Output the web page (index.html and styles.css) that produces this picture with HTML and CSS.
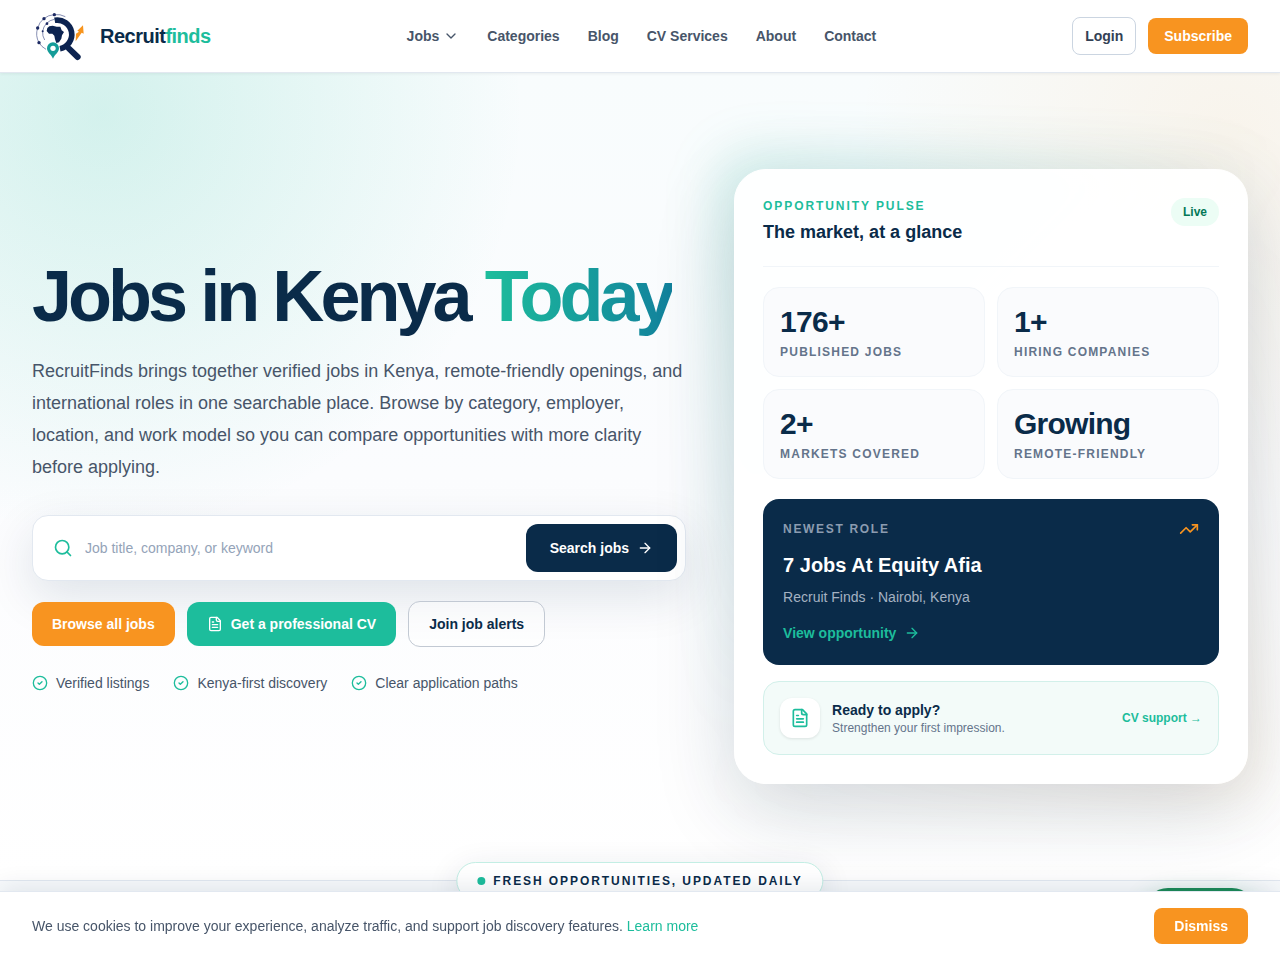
FILE: index.html
```html
<!DOCTYPE html>
<html lang="en">
<head>
    <meta charset="UTF-8">
    <meta name="viewport" content="width=device-width, initial-scale=1.0">
    <title>Recruitfinds - Jobs in Kenya Today</title>
    <link rel="stylesheet" href="styles.css">
</head>
<body>
    <header class="site-header">
        <a href="#" class="brand">
            <svg class="brand-logo" viewBox="36 24 168 168" aria-hidden="true">
                <g fill="none" stroke="#4a568c" stroke-width="2">
                    <path d="M136 50A54 54 0 0 0 103 44A54 54 0 0 0 53 84A54 54 0 0 0 57 128A54 54 0 0 0 78 148"/>
                    <path d="M103 58A42 42 0 0 0 68 94A42 42 0 0 0 74 120"/>
                </g>
                <g fill="#1d2a63">
                    <circle cx="103" cy="44" r="5"/>
                    <circle cx="72" cy="56" r="5"/>
                    <circle cx="53" cy="84" r="5"/>
                    <circle cx="57" cy="128" r="5"/>
                    <circle cx="81" cy="71" r="4"/>
                    <circle cx="68" cy="94" r="3"/>
                </g>
                <path d="M104 61A43 43 0 1 1 120 146" fill="none" stroke="#0c2350" stroke-width="17"/>
                <path d="M147 146L173 171" stroke="#0c2350" stroke-width="18" stroke-linecap="round"/>
                <path d="M82 84L88 79L98 77L110 80L121 80L125 91L132 96L126 106L124 116L117 127L109 129L105 118L103 107L97 101L87 101L80 93Z" fill="#0c2350"/>
                <path d="M167 124L168 101L177 95L172 92L189 76L191 101L185 98Z" fill="#f7941d"/>
                <path d="M99 176C94 164 81 157 81 145A18 18 0 0 1 117 145C117 157 104 164 99 176Z" fill="#149c98"/>
                <circle cx="99" cy="145" r="8" fill="#fff"/>
            </svg>
            <span class="brand-name">Recruit<span>finds</span></span>
        </a>
        <nav class="main-nav">
            <a href="#">Jobs
                <svg class="icon" viewBox="0 0 24 24"><path d="m6 9 6 6 6-6"/></svg>
            </a>
            <a href="#">Categories</a>
            <a href="#">Blog</a>
            <a href="#">CV Services</a>
            <a href="#">About</a>
            <a href="#">Contact</a>
        </nav>
        <div class="header-actions">
            <a href="#" class="btn-small btn-login">Login</a>
            <a href="#" class="btn-small btn-orange">Subscribe</a>
        </div>
    </header>

    <main>
        <section class="hero">
            <div class="hero-content">
                <h1>Jobs in Kenya <span>Today</span></h1>
                <p class="hero-text">RecruitFinds brings together verified jobs in Kenya, remote-friendly openings, and international roles in one searchable place. Browse by category, employer, location, and work model so you can compare opportunities with more clarity before applying.</p>

                <form class="search-form">
                    <svg class="icon icon-md" viewBox="0 0 24 24"><circle cx="11" cy="11" r="8"/><path d="m21 21-4.3-4.3"/></svg>
                    <input type="search" aria-label="Search jobs" placeholder="Job title, company, or keyword">
                    <button type="submit">Search jobs
                        <svg class="icon" viewBox="0 0 24 24"><path d="M5 12h14"/><path d="m12 5 7 7-7 7"/></svg>
                    </button>
                </form>

                <div class="hero-buttons">
                    <a href="#" class="btn btn-orange">Browse all jobs</a>
                    <a href="#" class="btn btn-teal">
                        <svg class="icon" viewBox="0 0 24 24"><path d="M15 2H6a2 2 0 0 0-2 2v16a2 2 0 0 0 2 2h12a2 2 0 0 0 2-2V7Z"/><path d="M14 2v4a2 2 0 0 0 2 2h4"/><path d="M10 9H8"/><path d="M16 13H8"/><path d="M16 17H8"/></svg>
                        Get a professional CV
                    </a>
                    <a href="#" class="btn btn-outline">Join job alerts</a>
                </div>

                <ul class="checks">
                    <li><svg class="icon" viewBox="0 0 24 24"><circle cx="12" cy="12" r="10"/><path d="m9 12 2 2 4-4"/></svg>Verified listings</li>
                    <li><svg class="icon" viewBox="0 0 24 24"><circle cx="12" cy="12" r="10"/><path d="m9 12 2 2 4-4"/></svg>Kenya-first discovery</li>
                    <li><svg class="icon" viewBox="0 0 24 24"><circle cx="12" cy="12" r="10"/><path d="m9 12 2 2 4-4"/></svg>Clear application paths</li>
                </ul>
            </div>

            <div class="pulse">
                <div class="pulse-card">
                    <div class="pulse-head">
                        <div>
                            <p class="eyebrow">Opportunity pulse</p>
                            <h2>The market, at a glance</h2>
                        </div>
                        <span class="live">Live</span>
                    </div>

                    <div class="stats">
                        <div class="stat"><strong>176+</strong><span>Published jobs</span></div>
                        <div class="stat"><strong>1+</strong><span>Hiring companies</span></div>
                        <div class="stat"><strong>2+</strong><span>Markets covered</span></div>
                        <div class="stat"><strong>Growing</strong><span>Remote-friendly</span></div>
                    </div>

                    <article class="newest">
                        <div class="newest-head">
                            <span>Newest role</span>
                            <svg class="icon icon-md" viewBox="0 0 24 24"><path d="M16 7h6v6"/><path d="m22 7-8.5 8.5-5-5L2 17"/></svg>
                        </div>
                        <h3>7 Jobs At Equity Afia</h3>
                        <p>Recruit Finds · Nairobi, Kenya</p>
                        <a href="#">View opportunity
                            <svg class="icon" viewBox="0 0 24 24"><path d="M5 12h14"/><path d="m12 5 7 7-7 7"/></svg>
                        </a>
                    </article>

                    <div class="cv-box">
                        <div class="cv-icon">
                            <svg class="icon icon-md" viewBox="0 0 24 24"><path d="M15 2H6a2 2 0 0 0-2 2v16a2 2 0 0 0 2 2h12a2 2 0 0 0 2-2V7Z"/><path d="M14 2v4a2 2 0 0 0 2 2h4"/><path d="M10 9H8"/><path d="M16 13H8"/><path d="M16 17H8"/></svg>
                        </div>
                        <div class="cv-text">
                            <h3>Ready to apply?</h3>
                            <p>Strengthen your first impression.</p>
                        </div>
                        <a href="#">CV support →</a>
                    </div>
                </div>
            </div>
        </section>

        <section class="fresh">
            <p class="fresh-pill">Fresh opportunities, updated daily</p>
        </section>
    </main>

    <a href="#" class="chat-button" aria-label="Chat"></a>

    <div class="cookie-bar">
        <p>We use cookies to improve your experience, analyze traffic, and support job discovery features. <a href="#">Learn more</a></p>
        <button type="button" class="btn-small btn-orange">Dismiss</button>
    </div>
</body>
</html>
```
FILE: styles.css
```css
* {
    box-sizing: border-box;
}
body {
    margin: 0;
    font-family: "Liberation Sans", Arial, sans-serif;
    font-size: 14px;
    line-height: 20px;
    color: #475569;
    background-color: #fff;
    overflow-x: hidden;
}
h1, h2, h3, p, ul {
    margin: 0;
    padding: 0;
}
a {
    color: inherit;
    text-decoration: none;
}
button, input {
    font-family: inherit;
    font-size: 14px;
    line-height: 20px;
}
button {
    border: none;
    cursor: pointer;
}
.icon {
    width: 16px;
    height: 16px;
    flex-shrink: 0;
    fill: none;
    stroke: currentColor;
    stroke-width: 2;
    stroke-linecap: round;
    stroke-linejoin: round;
}
.icon-md {
    width: 20px;
    height: 20px;
}

/* Header */
.site-header {
    position: sticky;
    top: 0;
    z-index: 10;
    display: flex;
    align-items: center;
    justify-content: space-between;
    padding: 8px 32px;
    background-color: #fff;
    border-bottom: 1px solid #e2e8f0;
    box-shadow: 0 1px 3px rgba(0, 0, 0, 0.06);
}
.brand {
    display: flex;
    align-items: center;
    gap: 12px;
}
.brand-logo {
    width: 56px;
    height: 56px;
}
.brand-name {
    font-size: 20px;
    line-height: 28px;
    font-weight: 700;
    letter-spacing: -0.025em;
    color: #0a2b49;
}
.brand-name span {
    color: #1dbd9c;
}
.main-nav {
    display: flex;
    gap: 28px;
    font-weight: 700;
}
.main-nav a {
    display: flex;
    align-items: center;
    gap: 4px;
}
.header-actions {
    display: flex;
    align-items: center;
    gap: 12px;
}
.btn-small {
    padding: 8px 16px;
    border-radius: 8px;
    font-weight: 700;
}
.btn-login {
    padding: 8px 12px;
    border: 1px solid #cbd5e1;
    color: #334155;
}
.btn-orange {
    background-color: #f89420;
    color: #fff;
}

/* Hero */
.hero {
    display: grid;
    grid-template-columns: 14fr 11fr;
    align-items: center;
    gap: 48px;
    padding: 96px 32px;
    background:
        radial-gradient(circle at 8% 5%, rgba(29, 189, 156, 0.17), transparent 30%),
        radial-gradient(circle at 96% 8%, rgba(248, 148, 32, 0.08), transparent 26%),
        linear-gradient(180deg, #f8fcfd 0%, #fbfcfe 50%, #fff 100%);
}
h1 {
    font-size: 72px;
    line-height: 70px;
    letter-spacing: -0.055em;
    color: #0a2b49;
}
h1 span {
    padding-bottom: 8px;
    color: transparent;
    background: linear-gradient(90deg, #1dbd9c, #12819c);
    -webkit-background-clip: text;
    background-clip: text;
}
.hero-text {
    margin-top: 24px;
    font-size: 18px;
    line-height: 32px;
}
.search-form {
    display: flex;
    align-items: center;
    gap: 12px;
    margin-top: 32px;
    padding: 8px 8px 8px 20px;
    background-color: #fff;
    border: 1px solid #e2e8f0;
    border-radius: 16px;
    box-shadow: 0 16px 48px rgba(10, 43, 73, 0.12);
}
.search-form .icon-md {
    color: #1dbd9c;
}
.search-form input {
    flex: 1;
    min-width: 0;
    padding: 0;
    border: none;
    outline: none;
    background: none;
    color: #0a2b49;
}
.search-form input::placeholder {
    color: #94a3b8;
}
.search-form button {
    display: flex;
    align-items: center;
    gap: 8px;
    padding: 14px 24px;
    border-radius: 12px;
    background-color: #0a2b49;
    color: #fff;
    font-weight: 700;
}
.hero-buttons {
    display: flex;
    flex-wrap: wrap;
    align-items: center;
    gap: 12px;
    margin-top: 20px;
}
.btn {
    display: flex;
    align-items: center;
    gap: 8px;
    padding: 12px 20px;
    border-radius: 12px;
    font-weight: 700;
}
.btn-teal {
    background-color: #1dbd9c;
    color: #fff;
}
.btn-outline {
    border: 1px solid #c2c9d3;
    background-color: rgba(255, 255, 255, 0.4);
    color: #0a2b49;
}
.checks {
    display: flex;
    flex-wrap: wrap;
    gap: 12px 24px;
    margin-top: 26px;
    list-style: none;
}
.checks li {
    display: flex;
    align-items: center;
    gap: 8px;
}
.checks .icon {
    color: #1dbd9c;
}

/* Opportunity pulse card */
.pulse {
    position: relative;
}
/* soft glow behind the card */
.pulse::before {
    content: "";
    position: absolute;
    inset: -20px;
    border-radius: 40px;
    background: linear-gradient(135deg, rgba(29, 189, 156, 0.16), transparent 50%, rgba(248, 148, 32, 0.08));
    filter: blur(24px);
}
.pulse-card {
    position: relative;
    padding: 28px;
    border: 1px solid #fff;
    border-radius: 32px;
    background-color: rgba(255, 255, 255, 0.95);
    box-shadow: 0 24px 80px rgba(10, 43, 73, 0.18);
}
.pulse-head {
    display: flex;
    align-items: flex-start;
    justify-content: space-between;
    padding-bottom: 20px;
    border-bottom: 1px solid #f1f5f9;
}
.eyebrow {
    font-size: 12px;
    line-height: 16px;
    font-weight: 700;
    letter-spacing: 0.16em;
    text-transform: uppercase;
    color: #1dbd9c;
}
.pulse-head h2 {
    margin-top: 4px;
    font-size: 18px;
    line-height: 28px;
    color: #0a2b49;
}
.live {
    padding: 6px 12px;
    border-radius: 14px;
    background-color: #ecfdf5;
    color: #047857;
    font-size: 12px;
    line-height: 16px;
    font-weight: 700;
}
.stats {
    display: grid;
    grid-template-columns: 1fr 1fr;
    gap: 12px;
    margin-top: 20px;
}
.stat {
    padding: 16px;
    border: 1px solid #f1f5f9;
    border-radius: 16px;
    background-color: #fafbfd;
}
.stat strong {
    display: block;
    font-size: 30px;
    line-height: 36px;
    letter-spacing: -0.025em;
    color: #0a2b49;
}
.stat span {
    display: block;
    margin-top: 4px;
    font-size: 12px;
    line-height: 16px;
    font-weight: 700;
    letter-spacing: 0.1em;
    text-transform: uppercase;
    color: #64748b;
}
.newest {
    margin-top: 20px;
    padding: 20px 20px 22px;
    border-radius: 16px;
    background-color: #0a2b49;
}
.newest-head {
    display: flex;
    align-items: center;
    justify-content: space-between;
    font-size: 12px;
    font-weight: 700;
    letter-spacing: 0.14em;
    text-transform: uppercase;
    color: #8c9cb0;
}
.newest-head .icon {
    color: #f89420;
}
.newest h3 {
    margin-top: 12px;
    font-size: 20px;
    line-height: 28px;
    color: #fff;
}
.newest p {
    margin-top: 8px;
    color: #a5b2c2;
}
.newest a {
    display: flex;
    align-items: center;
    gap: 8px;
    margin-top: 16px;
    font-weight: 700;
    color: #1dbd9c;
}
.cv-box {
    display: flex;
    align-items: center;
    gap: 12px;
    margin-top: 16px;
    padding: 16px;
    border: 1px solid #d2f0ea;
    border-radius: 16px;
    background-color: #f3fbf9;
}
.cv-icon {
    display: flex;
    padding: 10px;
    border-radius: 12px;
    background-color: #fff;
    color: #1dbd9c;
    box-shadow: 0 1px 3px rgba(0, 0, 0, 0.1);
}
.cv-text {
    flex: 1;
}
.cv-text h3 {
    font-size: 14px;
    line-height: 20px;
    color: #0a2b49;
}
.cv-text p {
    font-size: 12px;
    line-height: 16px;
    color: #64748b;
}
.cv-box > a {
    font-size: 12px;
    font-weight: 700;
    color: #1dbd9c;
}

/* Fresh opportunities */
.fresh {
    position: relative;
    min-height: 240px;
    border-top: 1px solid #e2e8f0;
    background-color: #f8fafc;
}
.fresh-pill {
    position: absolute;
    top: 0;
    left: 50%;
    transform: translate(-50%, -50%);
    display: flex;
    align-items: center;
    gap: 8px;
    padding: 10px 20px;
    border: 1px solid #c3eee4;
    border-radius: 20px;
    background-color: #fff;
    box-shadow: 0 8px 32px rgba(10, 43, 73, 0.12);
    color: #0a2b49;
    font-size: 12px;
    line-height: 16px;
    font-weight: 700;
    letter-spacing: 0.16em;
    text-transform: uppercase;
    white-space: nowrap;
}
.fresh-pill::before {
    content: "";
    width: 8px;
    height: 8px;
    border-radius: 50%;
    background-color: #1dbd9c;
}

/* Floating items */
.chat-button {
    position: fixed;
    right: 24px;
    bottom: 24px;
    width: 112px;
    height: 48px;
    border-radius: 24px;
    background-color: #1c8a57;
    box-shadow: 0 8px 24px rgba(28, 138, 87, 0.3);
}
.cookie-bar {
    position: fixed;
    left: 0;
    right: 0;
    bottom: 0;
    z-index: 20;
    display: flex;
    align-items: center;
    justify-content: space-between;
    padding: 16px 32px;
    border-top: 1px solid #e2e8f0;
    background-color: #fff;
    box-shadow: 0 -4px 24px rgba(10, 43, 73, 0.1);
}
.cookie-bar p a {
    color: #1dbd9c;
}
.cookie-bar button {
    padding: 8px 20px;
}
```
